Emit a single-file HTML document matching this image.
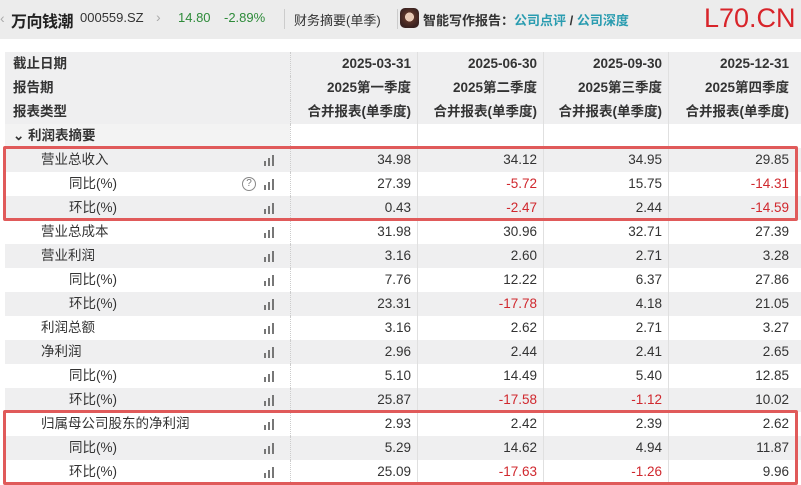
<!DOCTYPE html><html><head><meta charset="utf-8"><style>
*{margin:0;padding:0;box-sizing:border-box}
body{width:801px;height:485px;overflow:hidden;background:#fff;font-family:"Liberation Sans","Noto Sans CJK SC",sans-serif;position:relative;color:#333}
.top{position:absolute;left:0;top:0;width:801px;height:39px;background:#ececec}
.t{position:absolute;white-space:nowrap}
.row{position:absolute;left:5px;width:796px;height:24px;font-size:13.5px}
.row div{position:absolute;top:0;height:24px;line-height:24px;white-space:nowrap}
.g{background:#efeff0}
.c{text-align:right}
.c1{left:285px;width:127px;padding-right:6px;border-left:1px dotted #ccc}
.c2{left:412px;width:126px;padding-right:6px;border-left:1px solid #e0e0e0}
.c3{left:538px;width:125px;padding-right:6px;border-left:1px solid #e0e0e0}
.c4{left:663px;width:133px;padding-right:12px;border-left:1px solid #e0e0e0}
.r{color:#d0282e}
.box{position:absolute;left:3px;width:795px;border:3px solid #e05a5a;border-radius:2px}
</style></head><body>
<div class="top"></div>
<div class="t" style="left:0;top:10px;font-size:14px;color:#aaa">‹</div>
<div class="t" style="left:11px;top:8px;font-size:16px;font-weight:bold;color:#222;letter-spacing:-0.5px">万向钱潮</div>
<div class="t" style="left:80px;top:10px;font-size:13px;color:#333">000559.SZ</div>
<div class="t" style="left:156px;top:9px;font-size:14px;color:#aaa">›</div>
<div class="t" style="left:178px;top:10px;font-size:13px;color:#2e8b3a">14.80</div>
<div class="t" style="left:224px;top:10px;font-size:13px;color:#2e8b3a">-2.89%</div>
<div class="t" style="left:284px;top:9px;width:1px;height:20px;background:#ccc"></div>
<div class="t" style="left:294px;top:10px;font-size:13px;color:#333">财务摘要(单季)</div>
<div class="t" style="left:397px;top:9px;width:1px;height:20px;background:#ccc"></div>
<div class="t" style="left:400px;top:8px;width:19px;height:20px;border-radius:5px;background:radial-gradient(circle at 50% 45%,#e8c9b5 0 30%,#5a3328 32%,#3a2220 70%)"></div>
<div class="t" style="left:423px;top:10px;font-size:13px;font-weight:bold;color:#333">智能写作报告：<span style="color:#2a9cb0">公司点评</span> / <span style="color:#2a9cb0">公司深度</span></div>
<div class="t" style="left:704px;top:3px;font-size:27px;color:#d8242a">L70.CN</div>

<div class="row g" style="top:52px;height:72px"></div>
<div class="row" style="top:52px;font-weight:bold"><div style="left:8px">截止日期</div><div class="c c1">2025-03-31</div><div class="c c2">2025-06-30</div><div class="c c3">2025-09-30</div><div class="c c4">2025-12-31</div></div>
<div class="row" style="top:76px;font-weight:bold"><div style="left:8px">报告期</div><div class="c c1">2025第一季度</div><div class="c c2">2025第二季度</div><div class="c c3">2025第三季度</div><div class="c c4">2025第四季度</div></div>
<div class="row" style="top:100px;font-weight:bold"><div style="left:8px">报表类型</div><div class="c c1">合并报表(单季度)</div><div class="c c2">合并报表(单季度)</div><div class="c c3">合并报表(单季度)</div><div class="c c4">合并报表(单季度)</div></div>
<div class="row" style="top:124px"><div style="left:0;width:285px;background:#f3f3f3"></div><div style="left:8px;font-weight:bold">⌄ 利润表摘要</div><div class="c c1"></div><div class="c c2"></div><div class="c c3"></div><div class="c c4"></div></div>

<div id="rows"></div>
<script>
var d=[["营业总收入",0,"34.98","34.12","34.95","29.85"],["同比(%)",1,"27.39","-5.72","15.75","-14.31"],["环比(%)",1,"0.43","-2.47","2.44","-14.59"],["营业总成本",0,"31.98","30.96","32.71","27.39"],["营业利润",0,"3.16","2.60","2.71","3.28"],["同比(%)",1,"7.76","12.22","6.37","27.86"],["环比(%)",1,"23.31","-17.78","4.18","21.05"],["利润总额",0,"3.16","2.62","2.71","3.27"],["净利润",0,"2.96","2.44","2.41","2.65"],["同比(%)",1,"5.10","14.49","5.40","12.85"],["环比(%)",1,"25.87","-17.58","-1.12","10.02"],["归属母公司股东的净利润",0,"2.93","2.42","2.39","2.62"],["同比(%)",1,"5.29","14.62","4.94","11.87"],["环比(%)",1,"25.09","-17.63","-1.26","9.96"]];
var h="";
d.forEach(function(r,i){
var top=148+i*24;
h+='<div class="row'+(i%2==0?' g':'')+'" style="top:'+top+'px"><div style="left:'+(r[1]?64:36)+'px">'+r[0]+'</div>';
if(i==1)h+='<div style="left:237px;top:5px;width:14px;height:14px;border:1px solid #888;border-radius:50%;font-size:10px;line-height:12px;text-align:center;color:#777">?</div>';
h+='<svg style="position:absolute;left:258px;top:7px" width="12" height="11"><rect x="1" y="6" width="2" height="5" fill="#777"/><rect x="5" y="3" width="2" height="8" fill="#777"/><rect x="9" y="0" width="2" height="11" fill="#777"/></svg>';
for(var k=2;k<6;k++){h+='<div class="c c'+(k-1)+(r[k][0]=="-"?' r':'')+'">'+r[k]+'</div>';}
h+='</div>';});
document.getElementById("rows").innerHTML=h;
</script>
<div class="box" style="top:146px;height:75px"></div>
<div class="box" style="top:410px;height:75px"></div>
</body></html>
